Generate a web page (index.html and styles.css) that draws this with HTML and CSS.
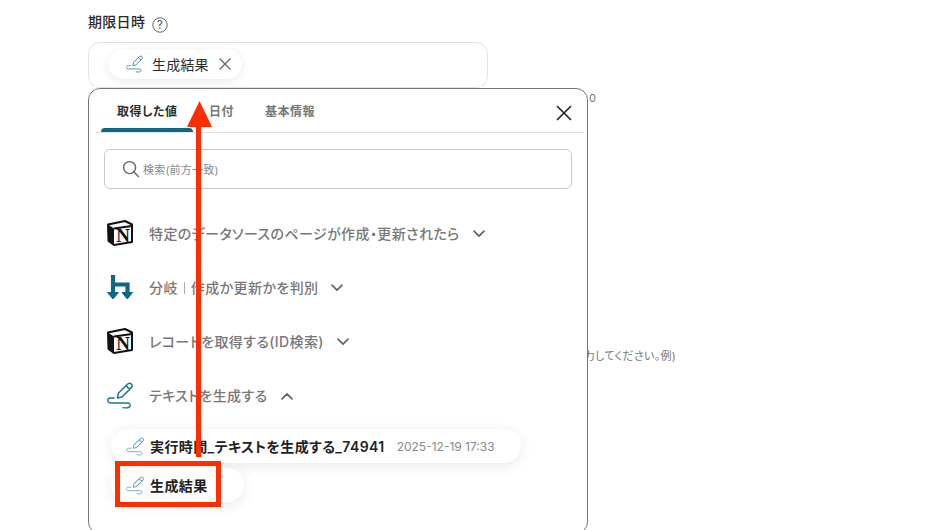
FILE: index.html
```html
<!DOCTYPE html>
<html lang="ja">
<head>
    <meta charset="UTF-8">
    <meta name="viewport" content="width=device-width, initial-scale=1.0">
    <title>期限日時</title>
    <link rel="stylesheet" href="styles.css">
</head>
<body>

    <svg class="icon-defs" width="0" height="0">
        <symbol id="pen" viewBox="0 0 26 27">
            <path d="M10.5 16 L11.5 11 L21 1.8 Q23 .6 24.6 2.2 Q25.8 4 24.4 5.6 L15 15 Z M19 3.8 L23 7.6" fill="none" stroke="currentColor" stroke-width="1.5" stroke-linejoin="round"/>
            <path d="M7 16 H3.5 C1.6 16 .8 17.3 .8 18.6 C.8 20 2 21 3.5 21 H20 C22.4 21 23.6 22.4 23.1 24 C22.6 25.6 20 26.2 16 25.6" fill="none" stroke="currentColor" stroke-width="1.3" stroke-linecap="round"/>
        </symbol>
        <symbol id="notion-box" viewBox="0 0 26 26">
            <path d="M1 4.5 L18 1 L25 4.5 V22 L7 25 L1.5 21 Z" fill="#fff" stroke="#111" stroke-width="2" stroke-linejoin="round"/>
            <path d="M1 4.5 L7 8.5 V25 L1.5 21 Z" fill="#111"/>
            <path d="M7 8.5 L25 6" stroke="#111" stroke-width="2"/>
        </symbol>
        <symbol id="chev-down" viewBox="0 0 12 8">
            <path d="M1 1.2 L6 6.2 L11 1.2" fill="none" stroke="currentColor" stroke-width="1.7" stroke-linecap="round" stroke-linejoin="round"/>
        </symbol>
    </svg>

    <main class="page">
        <div class="field-label">
            <span>期限日時</span>
            <svg class="help-icon" viewBox="0 0 16 16" width="16" height="16">
                <circle cx="8" cy="8" r="7.2" fill="none" stroke="#666" stroke-width="1"/>
                <text x="8" y="12" class="help-mark" text-anchor="middle">?</text>
            </svg>
        </div>

        <div class="select-box">
            <div class="chip">
                <svg class="chip-pen"><use href="#pen"/></svg>
                <span class="chip-text">生成結果</span>
                <svg class="chip-x" viewBox="0 0 14 14" width="14" height="14">
                    <path d="M1.5 1.5 L12.5 12.5 M12.5 1.5 L1.5 12.5" stroke="#666" stroke-width="1.3" fill="none"/>
                </svg>
            </div>
        </div>
        <p class="hint hint-count">0</p>
        <p class="hint hint-example">力してください。例)</p>
    </main>

    <section class="popup">
        <div class="tabs">
            <div class="tab tab-active">取得した値</div>
            <div class="tab tab-date">日付</div>
            <div class="tab tab-info">基本情報</div>
            <svg class="popup-close" viewBox="0 0 16 16" width="16" height="16">
                <path d="M1 1 L15 15 M15 1 L1 15" stroke="#222" stroke-width="1.6" fill="none"/>
            </svg>
        </div>

        <div class="search">
            <svg viewBox="0 0 18 18" width="18" height="18">
                <circle cx="7.6" cy="7.6" r="6" fill="none" stroke="#666" stroke-width="1.4"/>
                <path d="M12 12 L16.4 16.4" stroke="#666" stroke-width="1.4" stroke-linecap="round"/>
            </svg>
            <span>検索(前方一致)</span>
        </div>

        <ul class="step-list">
            <li class="step">
                <svg class="step-icon" viewBox="0 0 26 26">
                    <use href="#notion-box" width="26" height="26"/>
                    <text x="16" y="21.5" class="notion-n" text-anchor="middle">N</text>
                </svg>
                <span class="step-name">特定のデータソースのページが作成・更新されたら</span>
                <svg class="chev"><use href="#chev-down"/></svg>
            </li>
            <li class="step">
                <svg class="step-icon" viewBox="0 0 26 26">
                    <path d="M6 1 V19 M6 10.5 H20.5 V19" fill="none" stroke="#0b6a82" stroke-width="4.2"/>
                    <path d="M.5 18.5 H11.5 L6 25 Z M15 18.5 H25.5 L20.3 25 Z" fill="#0b6a82" stroke="#0b6a82" stroke-linejoin="round"/>
                </svg>
                <span class="step-name">分岐<span class="step-sep"></span>作成か更新かを判別</span>
                <svg class="chev"><use href="#chev-down"/></svg>
            </li>
            <li class="step">
                <svg class="step-icon" viewBox="0 0 26 26">
                    <use href="#notion-box" width="26" height="26"/>
                    <text x="16" y="21.5" class="notion-n" text-anchor="middle">N</text>
                </svg>
                <span class="step-name">レコードを取得する(ID検索)</span>
                <svg class="chev"><use href="#chev-down"/></svg>
            </li>
            <li class="step">
                <svg class="step-icon step-pen"><use href="#pen"/></svg>
                <span class="step-name">テキストを生成する</span>
                <svg class="chev chev-up"><use href="#chev-down"/></svg>
            </li>
        </ul>

        <div class="results">
            <div class="pill">
                <svg class="pill-pen"><use href="#pen"/></svg>
                <span class="pill-text">実行時間_テキストを生成する_74941</span>
                <span class="pill-date">2025-12-19 17:33</span>
            </div>
            <div class="pill pill-short">
                <svg class="pill-pen"><use href="#pen"/></svg>
                <span class="pill-text">生成結果</span>
            </div>
        </div>
    </section>

    <!-- annotation drawn over the screenshot -->
    <div class="mark-box"></div>
    <svg class="mark-arrow" viewBox="0 0 26 356" width="26" height="356">
        <path d="M12.5 0 L25 26 H14 V356 H9 V26 H0 Z" fill="#ff2d00"/>
    </svg>

</body>
</html>
```

FILE: styles.css
```css
html, body {
    height: 530px;
    overflow: hidden;
}
body {
    font-family: Inter, "Noto Sans CJK JP", sans-serif;
    font-feature-settings: "palt";
    background-color: #fff;
    color: #2b2b2b;
    margin: 0;
    position: relative;
}
.icon-defs {
    position: absolute;
}
.notion-n {
    font-family: "Liberation Serif", serif;
    font-weight: 700;
    font-size: 19px;
    fill: #111;
}
.page {
    padding: 11px 0 0 88px;
}
.field-label {
    display: flex;
    align-items: center;
    gap: 7px;
    height: 20px;
    font-size: 14px;
    font-weight: 500;
    letter-spacing: 0.3px;
}
.help-icon {
    margin-top: 7px;
}
.help-mark {
    font-family: Inter, sans-serif;
    font-size: 11.5px;
    fill: #666;
}
.select-box {
    box-sizing: border-box;
    width: 400px;
    height: 46px;
    margin-top: 11px;
    padding: 6px 19px;
    border: 1px solid #e2e2e2;
    border-radius: 12px;
}
.chip {
    display: inline-flex;
    align-items: center;
    box-sizing: border-box;
    width: 134px;
    height: 30px;
    padding-left: 18px;
    border-radius: 15px;
    background-color: #fff;
    box-shadow: 0 2px 10px rgba(0, 0, 0, 0.09);
}
.chip-pen {
    width: 17px;
    height: 18px;
    color: #3f8aa0;
}
.chip-text {
    margin-left: 9px;
    font-size: 14px;
    letter-spacing: 0.2px;
}
.chip-x {
    margin-left: 9px;
}
.hint {
    margin: 0;
    font-size: 11px;
    color: #777;
    text-align: right;
}
.hint-count {
    width: 508px;
    margin-top: 3px;
}
.hint-example {
    width: 588px;
    margin-top: 242px;
    letter-spacing: 0.3px;
}
.popup {
    position: absolute;
    top: 88px;
    left: 88px;
    box-sizing: border-box;
    width: 500px;
    height: 446px;
    border: 1px solid #777;
    border-radius: 12px;
    background-color: #fff;
}
.tabs {
    position: relative;
    display: flex;
    height: 43px;
    margin: 0 3px 0 7px;
    padding-left: 5px;
    border-bottom: 1px solid #e4e4e4;
}
.tab {
    box-sizing: border-box;
    padding: 14px 0 0 16px;
    font-size: 12px;
    font-weight: 700;
    letter-spacing: 0.5px;
    line-height: 18px;
    color: #777;
}
.tab-active {
    position: relative;
    width: 92px;
    color: #2b2b2b;
}
.tab-active::after {
    content: "";
    position: absolute;
    left: 0;
    right: 0;
    bottom: 0;
    height: 4px;
    border-radius: 4px 4px 0 0;
    background-color: #0b6a82;
}
.tab-info {
    padding-left: 31px;
}
.popup-close {
    position: absolute;
    top: 16px;
    right: 12px;
}
.search {
    display: flex;
    align-items: center;
    gap: 3px;
    box-sizing: border-box;
    height: 40px;
    margin: 16px 15px 0;
    padding-left: 17px;
    border: 1px solid #c8c8c8;
    border-radius: 6px;
    font-size: 11px;
    font-feature-settings: normal;
    letter-spacing: 0.2px;
    color: #888;
}
.step-list {
    list-style: none;
    margin: 17px 0 0;
    padding: 0 0 0 18px;
}
.step {
    display: flex;
    align-items: center;
    height: 54px;
}
.step-icon {
    flex: none;
    width: 26px;
    height: 26px;
}
.step-pen {
    height: 27px;
    color: #1f7389;
}
.step-name {
    margin-left: 16px;
    font-size: 14px;
    font-weight: 500;
    letter-spacing: 0.4px;
    color: #777;
}
.step-sep {
    display: inline-block;
    width: 1px;
    height: 12px;
    margin: 0 6px;
    background-color: #aaa;
    vertical-align: -1px;
}
.chev {
    width: 12px;
    height: 8px;
    margin: 2px 0 0 13px;
    color: #666;
}
.chev-up {
    transform: rotate(180deg);
}
.results {
    display: flex;
    flex-direction: column;
    align-items: flex-start;
    gap: 5px;
    margin: 7px 0 0 22px;
}
.pill {
    display: flex;
    align-items: center;
    box-sizing: border-box;
    height: 34px;
    padding: 0 26px 0 15px;
    border-radius: 17px;
    background-color: #fff;
    box-shadow: 0 3px 14px rgba(0, 0, 0, 0.09);
}
.pill-short {
    width: 133px;
}
.pill-pen {
    width: 18px;
    height: 19px;
    color: #6fa5b5;
}
.pill-text {
    margin-left: 6px;
    font-size: 14px;
    font-weight: 600;
    letter-spacing: 0.4px;
    color: #222;
}
.pill-date {
    margin-left: 12px;
    font-size: 12px;
    color: #888;
}
.mark-box {
    position: absolute;
    top: 461px;
    left: 115px;
    box-sizing: border-box;
    width: 106px;
    height: 46px;
    border: 5px solid #ff2d00;
}
.mark-arrow {
    position: absolute;
    top: 101px;
    left: 187px;
}
```
